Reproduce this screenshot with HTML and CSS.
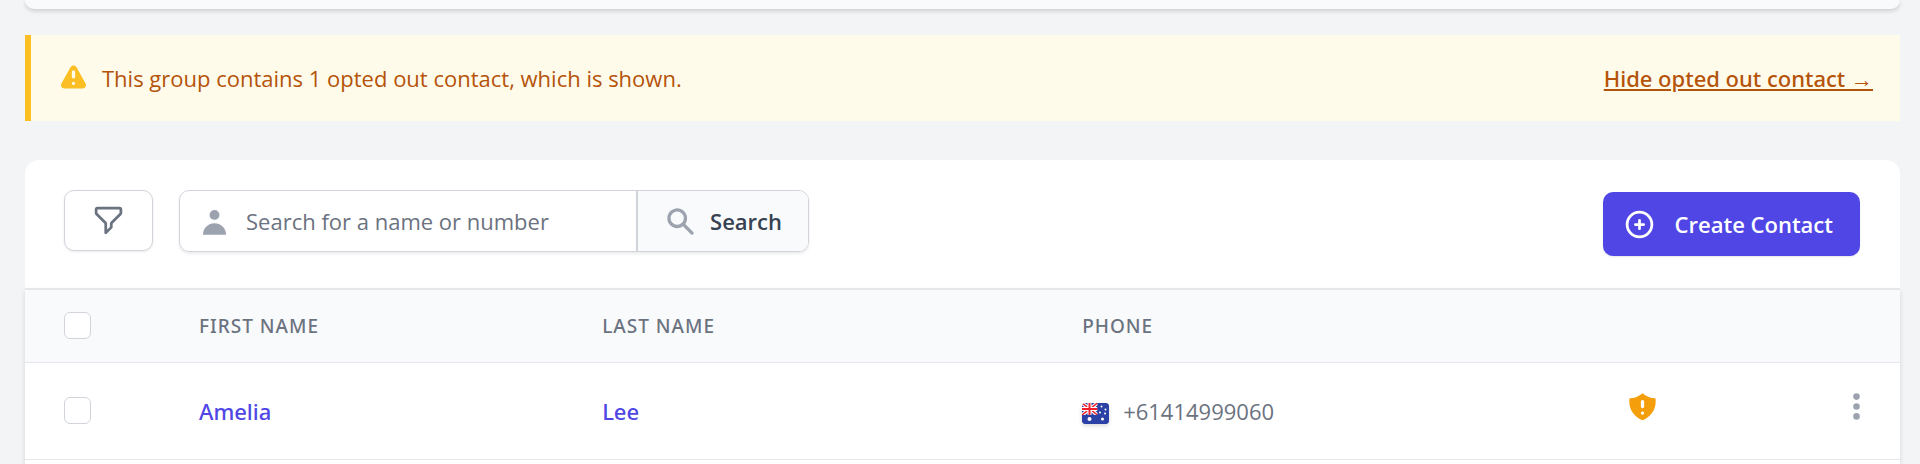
FILE: index.html
```
<!DOCTYPE html>
<html lang="en">
<head>
  <meta charset="utf-8">
  <meta name="viewport" content="width=device-width, initial-scale=1">
  <title>Contacts</title>
  <link rel="stylesheet" href="styles.css">
</head>
<body>
  <div class="panel-end"></div>

  <div class="alert">
    <svg class="icon" viewBox="0 0 20 20" fill="currentColor" aria-hidden="true"><path fill-rule="evenodd" d="M8.257 3.099c.765-1.36 2.722-1.36 3.486 0l5.58 9.92c.75 1.334-.213 2.98-1.742 2.98H4.42c-1.53 0-2.493-1.646-1.743-2.98l5.58-9.92zM11 13a1 1 0 11-2 0 1 1 0 012 0zm-1-8a1 1 0 00-1 1v3a1 1 0 002 0V6a1 1 0 00-1-1z" clip-rule="evenodd"/></svg>
    <p>This group contains 1 opted out contact, which is shown.</p>
    <a href="#">Hide opted out contact →</a>
  </div>

  <main class="card">
    <div class="toolbar">
      <button type="button" class="btn filter" aria-label="Filter">
        <svg class="icon" viewBox="0 0 24 24" fill="none" stroke="currentColor" stroke-width="2" stroke-linecap="round" stroke-linejoin="round"><path d="M3 4a1 1 0 011-1h16a1 1 0 011 1v2.586a1 1 0 01-.293.707l-6.414 6.414a1 1 0 00-.293.707V17l-4 4v-6.586a1 1 0 00-.293-.707L3.293 7.293A1 1 0 013 6.586V4z"/></svg>
      </button>
      <form class="search">
        <label class="search-box">
          <svg class="icon" viewBox="0 0 20 20" fill="currentColor" aria-hidden="true"><path fill-rule="evenodd" d="M10 9a3 3 0 100-6 3 3 0 000 6zm-7 9a7 7 0 1114 0H3z"/></svg>
          <input type="text" name="q" aria-label="Search contacts" placeholder="Search for a name or number">
        </label>
        <button type="submit" class="search-btn">
          <svg class="icon" viewBox="0 0 20 20" fill="currentColor" aria-hidden="true"><path fill-rule="evenodd" d="M8 4a4 4 0 100 8 4 4 0 000-8zM2 8a6 6 0 1110.89 3.476l4.817 4.817a1 1 0 01-1.414 1.414l-4.816-4.816A6 6 0 012 8z"/></svg>
          Search
        </button>
      </form>
      <button type="button" class="btn create">
        <svg class="icon" viewBox="0 0 24 24" fill="none" stroke="currentColor" stroke-width="2" stroke-linecap="round" stroke-linejoin="round" aria-hidden="true"><path d="M12 9v3m0 0v3m0-3h3m-3 0H9m12 0a9 9 0 11-18 0 9 9 0 0118 0z"/></svg>
        Create Contact
      </button>
    </div>

    <div class="table-wrap">
      <table class="contacts">
        <thead>
          <tr>
            <th class="col-check"><input type="checkbox" aria-label="Select all"></th>
            <th class="col-first">First name</th>
            <th class="col-last">Last name</th>
            <th class="col-phone">Phone</th>
            <th></th>
            <th></th>
          </tr>
        </thead>
        <tbody>
          <tr>
            <td><input type="checkbox" aria-label="Select Amelia Lee"></td>
            <td><a href="#">Amelia</a></td>
            <td><a href="#">Lee</a></td>
            <td>
              <div class="phone">
                <svg class="flag" viewBox="0 0 54 42" role="img" aria-label="Australia">
                  <path fill="#2b41a5" d="M0 0h54v42H0z"/>
                  <path stroke="#fff" stroke-width="7" d="M0 0l31 24M31 0L0 24"/>
                  <path stroke="#f01e28" stroke-width="3" d="M0 0l31 24M31 0L0 24"/>
                  <path stroke="#fff" stroke-width="8" d="M15 0v24M0 12h31"/>
                  <path stroke="#f01e28" stroke-width="4" d="M15 0v24M0 12h31"/>
                  <path fill="#2b41a5" d="M31 0h23v42H0V24h31z"/>
                  <g fill="#fff"><circle cx="15" cy="32" r="4"/><circle cx="39" cy="7" r="2"/><circle cx="47" cy="13" r="2"/><circle cx="36" cy="19" r="2"/><circle cx="46" cy="21" r="2"/><circle cx="41" cy="32" r="3"/></g>
                </svg>
                +61414999060
              </div>
            </td>
            <td class="status">
              <svg class="icon" viewBox="0 0 20 20" fill="currentColor" role="img" aria-label="Opted out"><path fill-rule="evenodd" d="M10 1.944A11.954 11.954 0 012.166 5C2.056 5.649 2 6.319 2 7c0 5.225 3.34 9.67 8 11.317C14.66 16.67 18 12.225 18 7c0-.682-.057-1.35-.166-2.001A11.954 11.954 0 0110 1.944zM11 14a1 1 0 11-2 0 1 1 0 012 0zm0-7a1 1 0 10-2 0v3a1 1 0 102 0V7z"/></svg>
            </td>
            <td class="actions">
              <button type="button" aria-label="Options">
                <svg class="icon" viewBox="0 0 20 20" fill="currentColor"><path d="M10 6a2 2 0 110-4 2 2 0 010 4zM10 12a2 2 0 110-4 2 2 0 010 4zM10 18a2 2 0 110-4 2 2 0 010 4z"/></svg>
              </button>
            </td>
          </tr>
        </tbody>
      </table>
    </div>
  </main>
</body>
</html>
```

FILE: styles.css
```
* {
  box-sizing: border-box;
}
body {
  display: flex;
  flex-direction: column;
  min-height: 100vh;
  margin: 0;
  padding: 0 20px 0 25px;
  background: #f3f4f6;
  color: #6b7280;
  font-family: "Open Sans", "Noto Sans", sans-serif;
  font-size: 22px;
  line-height: 34px;
}
button, input {
  font: inherit;
}
button {
  cursor: pointer;
}
.icon {
  display: block;
  flex: none;
  width: 33px;
  height: 33px;
}

/* bottom edge of the group details panel */
.panel-end {
  height: 9px;
  border-radius: 0 0 10px 10px;
  background: #f9fafb;
  box-shadow: 0 2px 4px rgba(0, 0, 0, .16);
}

.alert {
  display: flex;
  align-items: center;
  margin-top: 26px;
  padding: 26px 27px 26px 26px;
  border-left: 6px solid #fbbf24;
  background: #fffbeb;
  color: #b45309;
}
.alert .icon {
  margin-right: 12px;
  color: #fbbf24;
}
.alert p {
  flex: 1;
  margin: 0;
}
/* Open Sans has no medium weight */
.alert a, .contacts a, th {
  font-family: "Noto Sans", sans-serif;
  font-weight: 500;
}
.alert a {
  color: #b45309;
  text-underline-offset: 2px;
  text-decoration-thickness: 2px;
}

.card {
  display: flex;
  flex: 1;
  flex-direction: column;
  margin-top: 39px;
  border-radius: 14px 14px 0 0;
  background: #fff;
}
.toolbar {
  display: flex;
  align-items: flex-start;
  padding: 30px 40px 32px 39px;
}
.btn {
  display: flex;
  align-items: center;
  border-radius: 10px;
}
.filter {
  margin-right: 26px;
  padding: 13px 27px;
  border: 1px solid #d1d5db;
  background: #fff;
  color: #6b7280;
  box-shadow: 0 1px 3px rgba(0, 0, 0, .08);
}
.search {
  display: flex;
  width: 630px;
  border: 1px solid #d1d5db;
  border-radius: 10px;
  box-shadow: 0 2px 3px rgba(0, 0, 0, .08);
}
.search-box {
  display: flex;
  flex: 1;
  align-items: center;
  min-width: 0;
  padding: 0 18px;
}
.search-box .icon, .search-btn .icon {
  color: #9ca3af;
}
.search-box input {
  flex: 1;
  min-width: 0;
  height: 60px;
  padding: 0 0 0 15px;
  border: 0;
  outline: 0;
  background: none;
  color: #111827;
}
.search-box input::placeholder {
  color: #6b7280;
  opacity: 1;
}
.search-btn {
  display: flex;
  align-items: center;
  gap: 13px;
  padding: 0 26px;
  border: 0;
  border-left: 2px solid #d1d5db;
  border-radius: 0 9px 9px 0;
  background: #f9fafb;
  color: #374151;
  font-weight: 600;
}
.create {
  gap: 19px;
  margin: 2px 0 0 auto;
  padding: 15px 27px 15px 20px;
  border: 0;
  background: #4f46e5;
  color: #fff;
  font-weight: 600;
  box-shadow: 0 1px 2px rgba(0, 0, 0, .1);
}

.table-wrap {
  flex: 1;
  border-top: 2px solid #e5e7eb;
  box-shadow: 0 3px 5px rgba(0, 0, 0, .12);
}
.contacts {
  width: 100%;
  border-collapse: collapse;
  table-layout: fixed;
}
th, td {
  padding: 0 0 0 39px;
  text-align: left;
}
th {
  height: 72px;
  border-bottom: 1px solid #e5e7eb;
  background: #f9fafb;
  font-size: 19px;
  letter-spacing: 1px;
  text-transform: uppercase;
}
td {
  height: 97px;
  border-bottom: 1px solid #e5e7eb;
}
.contacts a {
  color: #4f46e5;
  text-decoration: none;
}
.contacts input {
  display: block;
  appearance: none;
  width: 27px;
  height: 27px;
  margin: 0;
  border: 1px solid #d1d5db;
  border-radius: 6px;
  background: #fff;
}
.contacts input:checked {
  background: #4f46e5;
}
.col-check {
  width: 7.2%;
}
.col-first {
  width: 21.5%;
}
.col-last {
  width: 25.6%;
}
.col-phone {
  width: 29%;
}
.phone {
  display: flex;
  align-items: center;
  gap: 14px;
}
.flag {
  width: 27px;
  height: 21px;
  margin-top: 6px;
  border-radius: 4px;
  box-shadow: 0 2px 4px rgba(0, 0, 0, .15);
}
.status {
  padding-bottom: 8px;
  color: #f59e0b;
}
.actions {
  padding: 0 27px 9px 0;
}
.actions button {
  display: block;
  margin-left: auto;
  padding: 0;
  border: 0;
  background: none;
  color: #9ca3af;
}
```
